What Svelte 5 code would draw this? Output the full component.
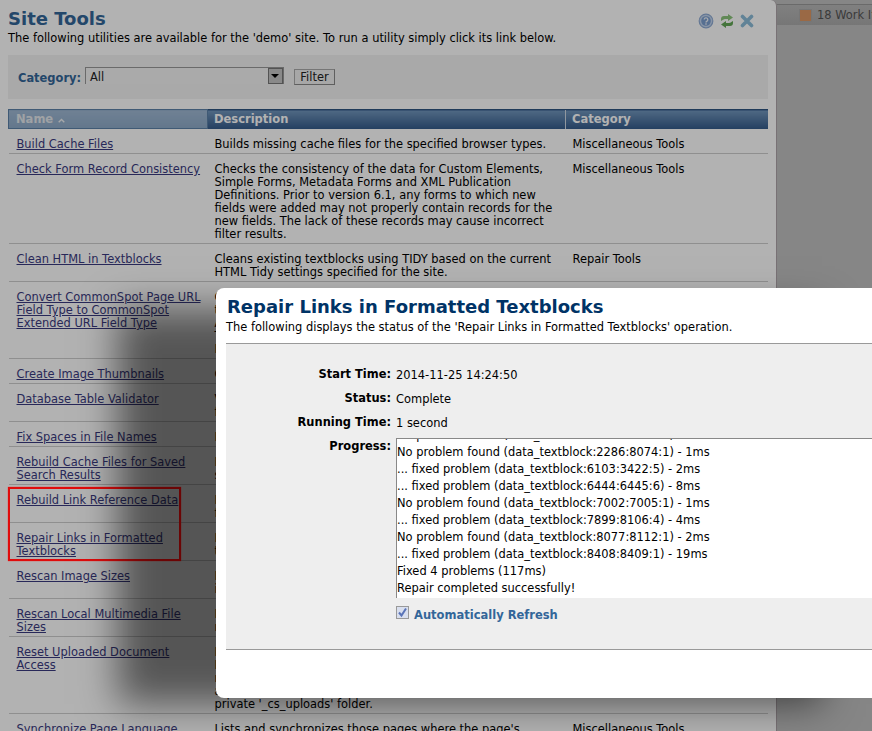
<script lang="ts">
  interface ToolRow {
    name: string;
    desc: string;
    category: string;
  }

  const TOOLS: ToolRow[] = [
    { name: 'Build Cache Files', desc: 'Builds missing cache files for the specified browser types.', category: 'Miscellaneous Tools' },
    {
      name: 'Check Form Record Consistency',
      desc: 'Checks the consistency of the data for Custom Elements,\nSimple Forms, Metadata Forms and XML Publication\nDefinitions. Prior to version 6.1, any forms to which new\nfields were added may not properly contain records for the\nnew fields. The lack of these records may cause incorrect\nfilter results.',
      category: 'Miscellaneous Tools',
    },
    { name: 'Clean HTML in Textblocks', desc: 'Cleans existing textblocks using TIDY based on the current\nHTML Tidy settings specified for the site.', category: 'Repair Tools' },
    {
      name: 'Convert CommonSpot Page URL\nField Type to CommonSpot\nExtended URL Field Type',
      desc: 'Converts fields of the CommonSpot Page URL\ntype to the Extended URL type.\nAll data is kept.\nThis can take a while.\nRun it once.',
      category: 'Miscellaneous Tools',
    },
    { name: 'Create Image Thumbnails', desc: 'Creates missing image thumbnails.', category: 'Repair Tools' },
    { name: 'Database Table Validator', desc: 'Validates the database tables\nfor this site.', category: 'Repair Tools' },
    { name: 'Fix Spaces in File Names', desc: 'Removes spaces in file names.', category: 'Repair Tools' },
    { name: 'Rebuild Cache Files for Saved\nSearch Results', desc: 'Rebuilds cache files for saved\nsearch results.', category: 'Miscellaneous Tools' },
    { name: 'Rebuild Link Reference Data', desc: 'Rebuilds link reference data\nfor this site.', category: 'Repair Tools' },
    { name: 'Repair Links in Formatted\nTextblocks', desc: 'Repairs links in formatted\ntextblocks.', category: 'Repair Tools' },
    { name: 'Rescan Image Sizes', desc: 'Rescans the sizes of images\nin this site.', category: 'Repair Tools' },
    { name: 'Rescan Local Multimedia File\nSizes', desc: 'Rescans the sizes of local\nmultimedia files.', category: 'Repair Tools' },
    {
      name: 'Reset Uploaded Document\nAccess',
      desc: 'Resets access to uploaded documents.\nFiles with restricted access are\nmoved as needed and public ones\nare moved out of the\nprivate \'_cs_uploads\' folder.',
      category: 'Miscellaneous Tools',
    },
    { name: 'Synchronize Page Language', desc: 'Lists and synchronizes those pages where the page\'s\nlanguage differs from its parent.', category: 'Miscellaneous Tools' },
  ];

  const STATUS = [
    { label: 'Start Time:', value: '2014-11-25 14:24:50' },
    { label: 'Status:', value: 'Complete' },
    { label: 'Running Time:', value: '1 second' },
  ];

  const LOG = [
    'No problem found (data_textblock:1184:7302:1) - 1ms',
    'No problem found (data_textblock:2286:8074:1) - 1ms',
    '... fixed problem (data_textblock:6103:3422:5) - 2ms',
    '... fixed problem (data_textblock:6444:6445:6) - 8ms',
    'No problem found (data_textblock:7002:7005:1) - 1ms',
    '... fixed problem (data_textblock:7899:8106:4) - 4ms',
    'No problem found (data_textblock:8077:8112:1) - 2ms',
    '... fixed problem (data_textblock:8408:8409:1) - 19ms',
    'Fixed 4 problems (117ms)',
    'Repair completed successfully!',
  ];
</script>

<div class="screen">
  <div class="topstrip">
    <div class="tab"><span class="swatch"></span>18 Work Items</div>
  </div>

  <div class="panel">
    <header class="panel-head">
      <div>
        <h1>Site Tools</h1>
        <p>The following utilities are available for the 'demo' site. To run a utility simply click its link below.</p>
      </div>
      <div class="tools">
        <svg width="16" height="16" viewBox="0 0 16 16">
          <circle cx="8" cy="8" r="6.800" fill="#c4d6ee" stroke="#8fabd4" stroke-width="1.200" />
          <circle cx="8" cy="8" r="4.800" fill="#7c9fd0" />
          <path d="M6.200 6.600a1.800 1.800 0 1 1 2.800 1.500c-.7.400-1 .7-1 1.300" fill="none" stroke="#eef3fa" stroke-width="1.300" />
          <rect x="7.300" y="10.300" width="1.400" height="1.400" fill="#eef3fa" />
        </svg>
        <svg width="14" height="16" viewBox="0 0 14 16">
          <path d="M1 6c0-2 1-3 3-3h4V1l5 3.500L8 8V6H5C3.500 6 3 7 1 8z" fill="#8cc47c" />
          <path d="M13 10c0 2-1 3-3 3H6v2l-5-3.500L6 8v2h3c1.500 0 2-1 4-2z" fill="#62a655" />
        </svg>
        <svg width="14" height="14" viewBox="0 0 14 14">
          <path d="M2.500 2.500l9 9M11.500 2.500l-9 9" stroke="#8cbcd8" stroke-width="3.600" stroke-linecap="round" />
        </svg>
      </div>
    </header>

    <form class="filter">
      <span class="filter-label">Category:</span>
      <div class="select">
        <span class="select-value">All</span>
        <span class="arrow"></span>
      </div>
      <span class="btn">Filter</span>
    </form>

    <table>
      <colgroup>
        <col class="col-name" />
        <col class="col-desc" />
        <col />
      </colgroup>
      <thead>
        <tr>
          <th class="sorted">
            Name
            <svg class="caret" width="7" height="5" viewBox="0 0 7 5">
              <path d="M.7 4.300L3.500 1.500l2.800 2.800" fill="none" stroke="#eef1f4" stroke-width="1.400" />
            </svg>
          </th>
          <th>Description</th>
          <th>Category</th>
        </tr>
      </thead>
      <tbody>
        {#each TOOLS as tool (tool.name)}
          <tr>
            <td><a href="#top">{tool.name}</a></td>
            <td>{tool.desc}</td>
            <td>{tool.category}</td>
          </tr>
        {/each}
      </tbody>
    </table>
  </div>

  <div class="overlay"></div>
  <div class="callout"></div>

  <section class="dialog">
    <h2>Repair Links in Formatted Textblocks</h2>
    <p class="intro">The following displays the status of the 'Repair Links in Formatted Textblocks' operation.</p>
    <div class="status">
      {#each STATUS as item (item.label)}
        <div class="status-row">
          <span class="status-label">{item.label}</span>
          <span class="status-value">{item.value}</span>
        </div>
      {/each}
      <div class="status-row progress-row">
        <span class="status-label">Progress:</span>
        <div class="progress-col">
          <div class="log">
            {#each LOG as line, i (i)}
              <div>{line}</div>
            {/each}
          </div>
          <div class="refresh">
            <span class="check">
              <svg width="11" height="11" viewBox="0 0 11 11">
                <path d="M2 5.500l2.500 3L9 1.500" fill="none" stroke="#5a74b8" stroke-width="2" />
              </svg>
            </span>
            <span class="refresh-label">Automatically Refresh</span>
          </div>
        </div>
      </div>
    </div>
  </section>
</div>

<style>
  :global(body) {
    margin: 0;
    background: #bfbfbf;
  }

  .screen {
    position: relative;
    width: 872px;
    height: 731px;
    overflow: hidden;
    font-family: 'DejaVu Sans', Verdana, sans-serif;
    font-size: 11.450px;
    line-height: 13px;
    color: #000;
    background: #c0c0c0;
  }

  /* strip with the work items tab, behind the panel's right edge */
  .topstrip {
    position: absolute;
    top: 4px;
    left: 0;
    right: 0;
    height: 21px;
    background: linear-gradient(#b8b8b8, #aaa);
    border-top: 1px solid #999;
    box-sizing: border-box;
  }

  .tab {
    position: absolute;
    left: 799px;
    top: 4px;
    display: flex;
    align-items: center;
    gap: 5px;
    color: #555;
    white-space: nowrap;
  }

  .swatch {
    width: 11px;
    height: 11px;
    background: #dd9763;
    border: 1px solid #aaa;
  }

  .panel {
    position: relative;
    width: 777px;
    height: 731px;
    box-sizing: border-box;
    padding: 8px 8px 0;
    background: #fff;
    border-right: 1px solid #aca3a8;
    border-top-right-radius: 6px;
    overflow: hidden;
  }

  .panel-head {
    display: flex;
    justify-content: space-between;
  }

  h1 {
    margin: 0;
    font-size: 18px;
    line-height: 21px;
    font-weight: 700;
    color: #336699;
  }

  .panel-head p {
    margin: 3px 0 0;
  }

  .tools {
    display: flex;
    align-items: center;
    gap: 6px;
    height: 26px;
    margin: 0 14px 0 0;
  }

  .filter {
    display: flex;
    align-items: center;
    height: 44px;
    margin-top: 10px;
    padding: 0 10px;
    background: #f2f2f2;
  }

  .filter-label {
    font-weight: 700;
    color: #336699;
    width: 67px;
    padding-top: 2px;
  }

  .select {
    display: flex;
    justify-content: space-between;
    align-items: center;
    box-sizing: border-box;
    width: 199px;
    height: 17px;
    margin-top: -3px;
    padding: 0 0 0 4px;
    background: #f4f4f4;
    border: 1px solid #999;
    border-bottom: 0;
    color: #222;
  }

  .select-value {
    padding-top: 3px;
  }

  .arrow {
    position: relative;
    width: 15px;
    height: 16px;
    box-sizing: border-box;
    background: #c4c4c4;
    border: 1px solid #777;
  }

  .arrow::after {
    content: '';
    position: absolute;
    left: 2px;
    top: 5px;
    border: 4px solid transparent;
    border-top: 4px solid #000;
    border-bottom: 0;
  }

  .btn {
    box-sizing: border-box;
    width: 41px;
    height: 16px;
    margin: 0 0 0 10px;
    text-align: center;
    line-height: 14px;
    color: #222;
    background: #f0f0f0;
    border: 1px solid #aaa;
    border-right-color: #888;
    border-bottom-color: #888;
  }

  table {
    width: 760px;
    margin-top: 10px;
    border-collapse: collapse;
    table-layout: fixed;
  }

  .col-name {
    width: 199px;
  }

  .col-desc {
    width: 358px;
  }

  th {
    height: 19px;
    box-sizing: border-box;
    padding: 1px 6px 0;
    text-align: left;
    font-weight: 700;
    font-size: 11.500px;
    color: #fff;
    background: linear-gradient(#7297bd, #33598a);
    border-top: 1px solid #2d5480;
    border-left: 1px solid #cfd9e4;
    white-space: nowrap;
  }

  th.sorted {
    padding-left: 7px;
    color: #e4e8ec;
    background: linear-gradient(#a0b9d4, #8eabc9);
    border: 1px solid #5c82a8;
  }

  .caret {
    margin-left: 1px;
  }

  td {
    padding: 9px 7px 2px 8px;
    vertical-align: top;
    white-space: pre;
    border-bottom: 1px solid #cdcdcd;
  }

  td:nth-child(n + 2) {
    padding-left: 7px;
  }

  td a {
    color: #3a3a80;
  }

  .overlay {
    position: absolute;
    inset: 0;
    background: rgba(0, 0, 0, 0.3);
  }

  .callout {
    position: absolute;
    left: 8px;
    top: 487px;
    width: 173px;
    height: 74px;
    box-sizing: border-box;
    border: 2px solid #e00c0c;
    box-shadow: 0 0 1px #f22;
  }

  .dialog {
    position: absolute;
    left: 216px;
    top: 288px;
    width: 720px;
    height: 410px;
    box-sizing: border-box;
    padding: 8px 0 0 10px;
    background: #fff;
    border-radius: 8px;
    box-shadow: -106px 14px 36px -8px rgba(0, 0, 0, 0.52);
  }

  h2 {
    margin: 0 0 0 1px;
    font-size: 18px;
    line-height: 21px;
    font-weight: 700;
    color: #003366;
  }

  .intro {
    margin: 4px 0 0;
  }

  .status {
    box-sizing: border-box;
    height: 307px;
    margin-top: 9px;
    padding-top: 24px;
    background: #eee;
    border-top: 1px solid #999;
    border-bottom: 1px solid #999;
  }

  .status-row {
    display: flex;
    gap: 5px;
    height: 24px;
    align-items: flex-start;
  }

  .status-label {
    width: 165px;
    text-align: right;
    font-weight: 700;
    flex: none;
  }

  .status-value {
    padding-top: 1px;
  }

  .progress-row {
    height: auto;
  }

  .progress-col {
    width: 600px;
    margin-top: -2px;
  }

  .log {
    display: flex;
    flex-direction: column;
    justify-content: flex-end;
    box-sizing: border-box;
    height: 160px;
    padding: 0 0 1px;
    overflow: hidden;
    background: #fff;
    border-top: 1px solid #888;
    border-left: 1px solid #888;
    line-height: 17px;
    white-space: nowrap;
  }

  .refresh {
    display: flex;
    align-items: flex-start;
    gap: 5px;
    margin: 8px 0 0;
    font-weight: 700;
    font-size: 11.500px;
    color: #336699;
  }

  .refresh-label {
    padding-top: 3px;
  }

  .check {
    display: flex;
    align-items: center;
    justify-content: center;
    width: 13px;
    height: 13px;
    box-sizing: border-box;
    background: #d9dfee;
    border: 1px solid #999;
  }
</style>
